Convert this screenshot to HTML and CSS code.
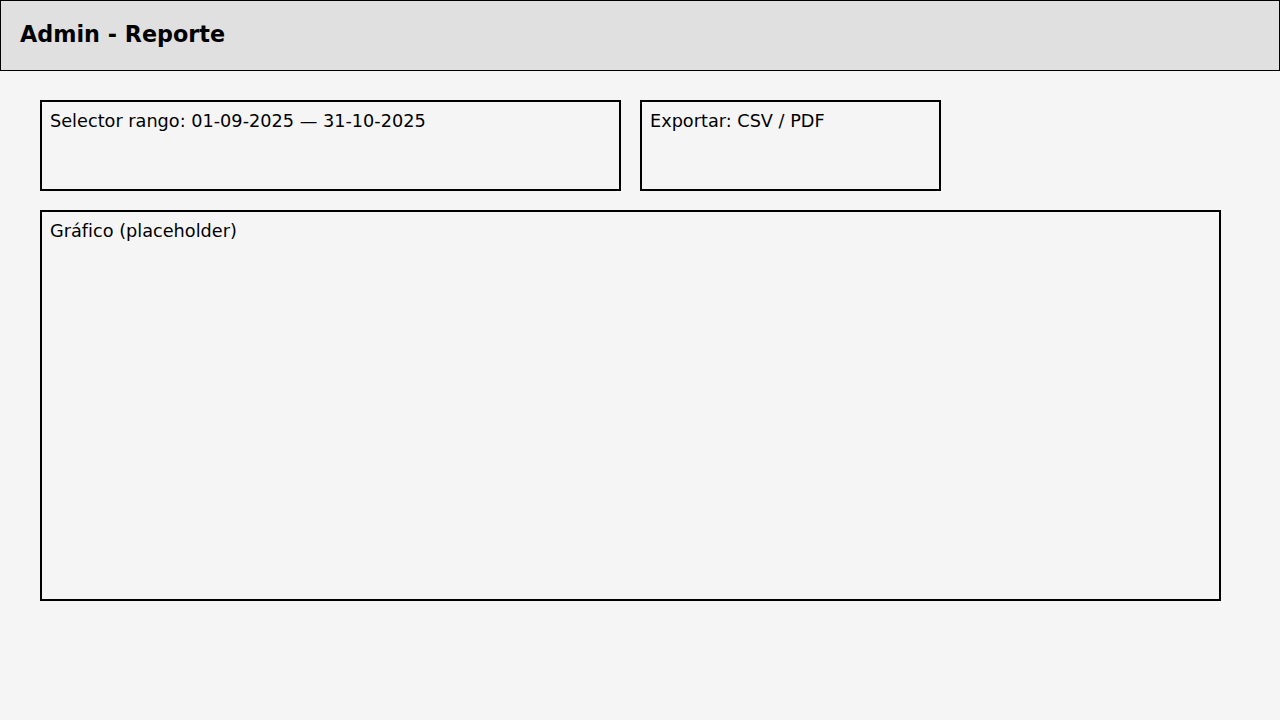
FILE: index.html
```html
<!DOCTYPE html>
<html lang="es">
<head>
<meta charset="utf-8">
<title>Admin - Reporte</title>
<link rel="stylesheet" href="styles.css">
</head>
<body>
<header class="topbar">
  <h1 class="title">Admin - Reporte</h1>
</header>
<main class="content">
  <div class="row">
    <div class="panel panel-range">Selector rango: 01-09-2025 — 31-10-2025</div>
    <div class="panel panel-export">Exportar: CSV / PDF</div>
  </div>
  <div class="panel panel-chart">Gráfico (placeholder)</div>
</main>
</body>
</html>
```
FILE: styles.css
```css
* { box-sizing: border-box; }
html, body {
  margin: 0;
  padding: 0;
  background: #f5f5f5;
  font-family: "DejaVu Sans", sans-serif;
  color: #000;
}
.topbar {
  height: 71px;
  background: #e0e0e0;
  border: 1px solid #000;
  padding: 20px 19px 0;
}
.title {
  margin: 0;
  font-size: 22.3px;
  line-height: normal;
  font-weight: bold;
}
.content {
  padding: 29px 40px;
  display: flex;
  flex-direction: column;
  gap: 19px;
}
.row {
  display: flex;
  gap: 19px;
}
.panel {
  border: 2px solid #000;
  padding: 9px 8px 8px;
  font-size: 17.7px;
  line-height: normal;
}
.panel-range { width: 581px; height: 91px; }
.panel-export { width: 301px; height: 91px; }
.panel-chart { width: 1181px; height: 391px; }
```
